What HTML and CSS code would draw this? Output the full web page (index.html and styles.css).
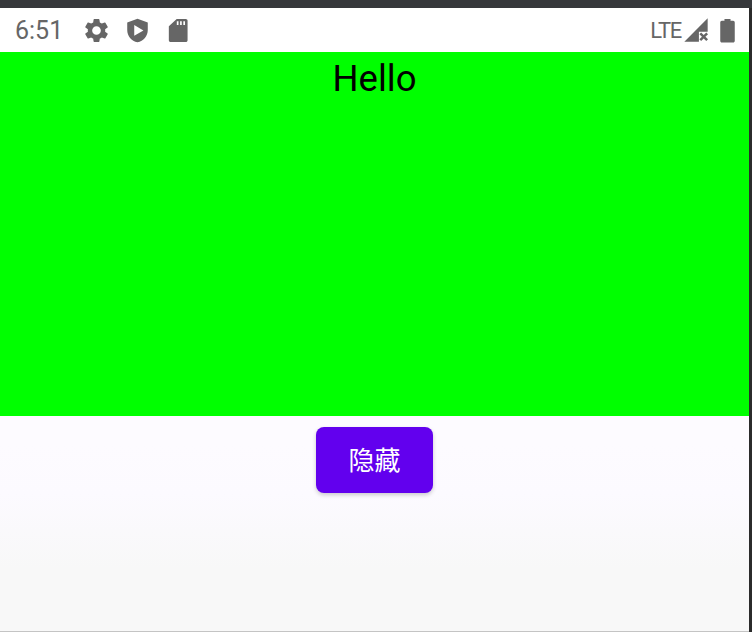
FILE: index.html

```html
<!DOCTYPE html>
<html lang="zh">
<head>
    <meta charset="UTF-8">
    <meta name="viewport" content="width=device-width, initial-scale=1.0">
    <title>Hello</title>
    <link rel="stylesheet" href="styles.css">
</head>
<body>
    <div class="device">
        <div class="screen">
            <!-- Status bar -->
            <div class="status-bar">
                <span class="clock">6:51</span>
                <div class="status-icons">
                    <svg class="icon" width="29" height="29" viewBox="0 0 24 24"><path d="M19.14 12.94c.04-.3.06-.61.06-.94 0-.32-.02-.64-.07-.94l2.03-1.58a.49.49 0 0 0 .12-.61l-1.92-3.32a.49.49 0 0 0-.59-.22l-2.39.96c-.5-.38-1.03-.7-1.62-.94l-.36-2.54a.48.48 0 0 0-.48-.41h-3.84c-.24 0-.43.17-.47.41l-.36 2.54c-.59.24-1.13.57-1.62.94l-2.39-.96c-.22-.08-.47 0-.59.22L2.74 8.87c-.12.21-.08.47.12.61l2.03 1.58c-.05.3-.09.63-.09.94s.02.64.07.94l-2.03 1.58a.49.49 0 0 0-.12.61l1.92 3.32c.12.22.37.29.59.22l2.39-.96c.5.38 1.03.7 1.62.94l.36 2.54c.05.24.24.41.48.41h3.84c.24 0 .44-.17.47-.41l.36-2.54c.59-.24 1.13-.56 1.62-.94l2.39.96c.22.08.47 0 .59-.22l1.92-3.32c.12-.22.07-.47-.12-.61l-2.01-1.58zM12 15.6A3.6 3.6 0 1 1 12 8.4a3.6 3.6 0 0 1 0 7.2z"/></svg>
                    <svg class="icon" width="29" height="29" viewBox="0 0 24 24"><path fill-rule="evenodd" d="M12 2.200 3.500 5.300v6.200c0 5 3.500 9.300 8.500 10.300 5-1 8.500-5.300 8.500-10.300V5.300zM9.300 7.500v8.800l7.600-4.400z"/></svg>
                    <svg class="icon" width="29" height="29" viewBox="0 0 24 24"><path fill-rule="evenodd" d="M18 2.500h-7.500L4 8.500V20c0 .9.700 1.500 1.500 1.500H18c.9 0 1.500-.6 1.500-1.500V4c0-.9-.6-1.500-1.500-1.500zM12 7.500h-1.400V4.300H12zm2.700 0h-1.400V4.300h1.400zm2.700 0H16V4.300h1.400z"/></svg>
                </div>
                <div class="status-right">
                    <span class="network">LTE</span>
                    <svg class="icon signal" width="28" height="28" viewBox="0 0 24 24"><path fill-rule="evenodd" d="M22 2 2 22h12.500v-8.500H22z"/><path d="m22.300 15.600-1.500-1.500-2.200 2.200-2.200-2.200-1.500 1.500 2.200 2.200-2.200 2.200 1.500 1.500 2.200-2.200 2.200 2.200 1.500-1.500-2.200-2.200z"/></svg>
                    <svg class="icon" width="29" height="29" viewBox="0 0 24 24"><path d="M16.700 4H14.500V2.500h-5V4H7.300C6.600 4 6 4.600 6 5.300v15.400c0 .7.600 1.300 1.300 1.300h9.400c.7 0 1.300-.6 1.300-1.300V5.300C18 4.600 17.400 4 16.700 4z"/></svg>
                </div>
            </div>

            <div class="green-box">Hello</div>

            <div class="actions">
                <button class="hide-btn">隐藏</button>
            </div>
        </div>
    </div>
</body>
</html>
```

FILE: styles.css

```css
body {
    margin: 0;
    background: #2b2b2b;
}

.device {
    width: 752px;
    height: 632px;
    padding: 8px 3px 0 0;
    box-sizing: border-box;
    background: linear-gradient(#36383b 8px, #2b2b2b 8px);
    overflow: hidden;
}

.screen {
    height: 100%;
    box-sizing: border-box;
    display: flex;
    flex-direction: column;
    background: linear-gradient(#fdfbff 70%, #fcfaff 78%, #f8f8f8 90%);
    border-bottom: 1px solid #c4c4c4;
    font-family: Roboto, sans-serif;
}

.status-bar {
    height: 44px;
    flex-shrink: 0;
    display: flex;
    align-items: center;
    padding: 0 7px 0 15px;
    background: white;
    color: #666;
}

.clock {
    font-size: 25px;
    width: 67px;
}

.status-icons {
    display: flex;
    gap: 12px;
}

.status-right {
    margin-left: auto;
    display: flex;
    align-items: center;
}

.network {
    font-size: 22px;
    letter-spacing: -1.300px;
    margin-right: 1px;
}

.signal {
    margin-right: 3px;
}

.icon {
    fill: #666;
    display: block;
}

.green-box {
    height: 364px;
    flex-shrink: 0;
    background: #00ff00;
    color: black;
    font-size: 36.500px;
    line-height: 54px;
    text-align: center;
}

.actions {
    display: flex;
    justify-content: center;
    padding-top: 11px;
}

.hide-btn {
    width: 117px;
    height: 66px;
    padding-bottom: 4px;
    border: none;
    border-radius: 8px;
    background: #6200ee;
    color: white;
    font-family: Roboto, "Noto Sans CJK SC", sans-serif;
    font-size: 26px;
    box-shadow: 0 2px 4px rgba(0,0,0,0.2);
}
```
